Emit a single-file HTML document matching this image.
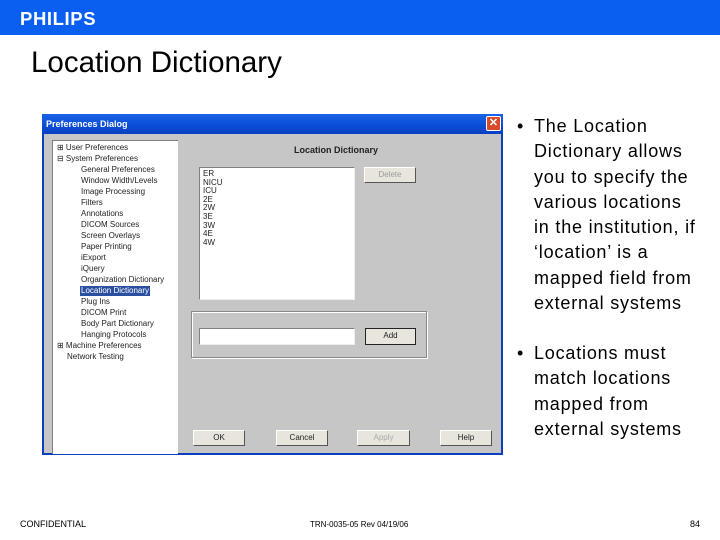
<!DOCTYPE html>
<html><head><style>
*{margin:0;padding:0;box-sizing:border-box}
body{width:720px;height:540px;background:#fff;position:relative;overflow:hidden;font-family:"Liberation Sans",sans-serif}
.a{position:absolute}
.hdr{left:0;top:0;width:720px;height:35px;background:#0b5ff0}
.logo{left:20px;top:8px;color:#fff;font-weight:bold;font-size:18.5px;letter-spacing:0.6px}
.title{left:31px;top:46px;font-size:29.5px;color:#000}
.dlg{left:42px;top:114px;width:461px;height:341px;background:#c6c6c6;border:2px solid #0a3fc0;border-top:none}
.tb{left:42px;top:114px;width:461px;height:20px;background:linear-gradient(#1a64e6,#0a4cd6 60%,#0840c0);color:#fff;font-size:9px;font-weight:bold;padding:5px 0 0 4px}
.x{left:486px;top:116px;width:15px;height:15px;background:#d94a2a;border:1px solid #fff;border-radius:2px;color:#fff;font-size:11px;line-height:13px;text-align:center;font-weight:bold}
.tree{left:52px;top:140px;width:126px;height:314px;background:#fff;border-top:1px solid #808080;border-left:1px solid #808080}
.ti{position:absolute;font-size:8px;color:#222;white-space:nowrap;line-height:10px}
.sel{background:#2a4fa0;color:#fff;padding:0 1px}
.box{background:#fff;border:1px solid #808080;border-right-color:#eee;border-bottom-color:#eee}
.btn{background:#e8e6dc;border:1px solid #fff;border-right-color:#555;border-bottom-color:#555;font-size:8px;text-align:center;line-height:14px;color:#222}
.grp{border:1px solid #888;box-shadow:1px 1px 0 #fff inset,1px 1px 0 #fff}
.li{font-size:8px;line-height:8.6px;color:#222;padding:2px 0 0 3px}
.txt{font-size:18px;letter-spacing:0.8px;color:#000;line-height:25.3px;white-space:nowrap}
.ft{font-size:9px;color:#000;top:519px}
</style></head><body>
<div class="a hdr"></div>
<div class="a logo">PHILIPS</div>
<div class="a title">Location Dictionary</div>

<div class="a dlg"></div>
<div class="a tb">Preferences Dialog</div>
<div class="a x">✕</div>
<div class="a tree">
<div class="ti" style="left:4px;top:2px">⊞ User Preferences</div>
<div class="ti" style="left:4px;top:13px">⊟ System Preferences</div>
<div class="ti" style="left:28px;top:24px">General Preferences</div>
<div class="ti" style="left:28px;top:35px">Window Width/Levels</div>
<div class="ti" style="left:28px;top:46px">Image Processing</div>
<div class="ti" style="left:28px;top:57px">Filters</div>
<div class="ti" style="left:28px;top:68px">Annotations</div>
<div class="ti" style="left:28px;top:79px">DICOM Sources</div>
<div class="ti" style="left:28px;top:90px">Screen Overlays</div>
<div class="ti" style="left:28px;top:101px">Paper Printing</div>
<div class="ti" style="left:28px;top:112px">iExport</div>
<div class="ti" style="left:28px;top:123px">iQuery</div>
<div class="ti" style="left:28px;top:134px">Organization Dictionary</div>
<div class="ti sel" style="left:27px;top:145px">Location Dictionary</div>
<div class="ti" style="left:28px;top:156px">Plug Ins</div>
<div class="ti" style="left:28px;top:167px">DICOM Print</div>
<div class="ti" style="left:28px;top:178px">Body Part Dictionary</div>
<div class="ti" style="left:28px;top:189px">Hanging Protocols</div>
<div class="ti" style="left:4px;top:200px">⊞ Machine Preferences</div>
<div class="ti" style="left:14px;top:211px">Network Testing</div>
</div>
<div class="a" style="left:294px;top:145px;font-size:9px;font-weight:bold;color:#222">Location Dictionary</div>
<div class="a box li" style="left:199px;top:167px;width:156px;height:133px">ER<br>NICU<br>ICU<br>2E<br>2W<br>3E<br>3W<br>4E<br>4W</div>
<div class="a btn" style="left:364px;top:167px;width:52px;height:16px;color:#999">Delete</div>
<div class="a grp" style="left:191px;top:311px;width:236px;height:47px"></div>
<div class="a box" style="left:199px;top:328px;width:156px;height:17px"></div>
<div class="a btn" style="left:365px;top:328px;width:51px;height:17px;border:1px solid #222">Add</div>
<div class="a btn" style="left:193px;top:430px;width:52px;height:16px">OK</div>
<div class="a btn" style="left:276px;top:430px;width:52px;height:16px">Cancel</div>
<div class="a btn" style="left:357px;top:430px;width:53px;height:16px;color:#aaa">Apply</div>
<div class="a btn" style="left:440px;top:430px;width:52px;height:16px">Help</div>

<div class="a txt" style="left:517px;top:114px">•</div>
<div class="a txt" style="left:534px;top:114px">The Location<br>Dictionary allows<br>you to specify the<br>various locations<br>in the institution, if<br>‘location’ is a<br>mapped field from<br>external systems</div>
<div class="a txt" style="left:517px;top:341px">•</div>
<div class="a txt" style="left:534px;top:341px">Locations must<br>match locations<br>mapped from<br>external systems</div>

<div class="a ft" style="left:20px">CONFIDENTIAL</div>
<div class="a ft" style="left:310px;font-size:8px;top:520px">TRN-0035-05 Rev 04/19/06</div>
<div class="a ft" style="left:690px">84</div>
</body></html>
